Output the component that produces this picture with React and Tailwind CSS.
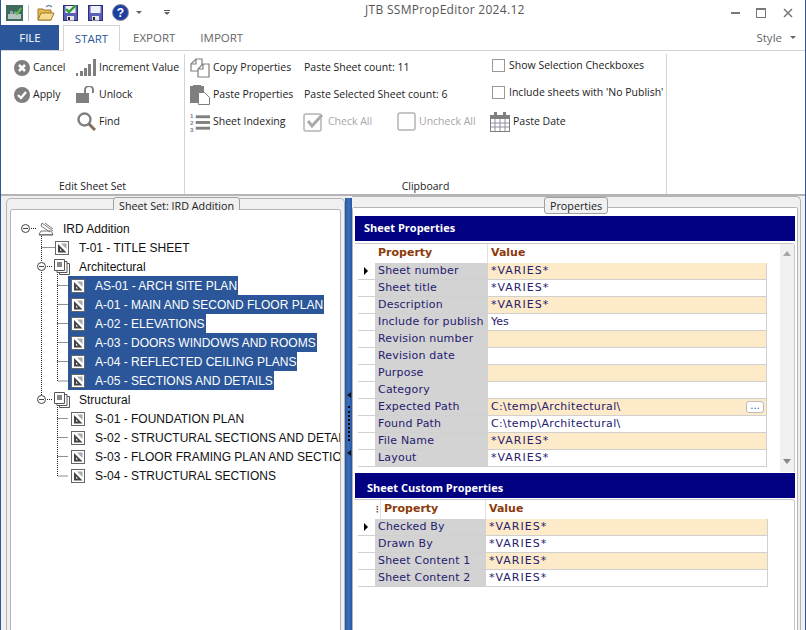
const ui = { fontFamily: '"Open Sans", "Liberation Sans", sans-serif' }

function AppIcon() {
  return (
    <svg width="17" height="16" viewBox="0 0 17 16">
      <rect width="17" height="16" fill="#3f6a5e" />
      <rect x="2" y="9" width="13" height="5" fill="#b7c4c4" />
      <path d="M4 9V6h3v3M8 9V7h3v2" fill="#8fa3a8" />
      <path d="M9 7l2 2 4-6" fill="none" stroke="#5fbf4f" strokeWidth="2" />
    </svg>
  )
}

function OpenIcon() {
  return (
    <svg width="18" height="18" viewBox="0 0 18 18">
      <path d="M9 3c2-2 4-2 6 0" fill="none" stroke="#6d8bb0" strokeWidth="1.2" />
      <path d="M1 5h5l1 1h7v10H1z" fill="#e8b94f" stroke="#9a7a2c" />
      <path d="M4 9h13l-3 7H1z" fill="#f6dc8e" stroke="#9a7a2c" />
    </svg>
  )
}

function SaveIcon({ check }) {
  return (
    <svg width="15" height="16" viewBox="0 0 15 16">
      <rect x="0.5" y="0.5" width="14" height="15" fill="#5a5fb8" stroke="#2d2f7a" />
      <rect x="2.5" y="1" width="10" height="7" fill="#eef0fa" />
      <rect x="4" y="11" width="7" height="4.5" fill="#e8e8e8" />
      <rect x="5" y="12" width="2" height="3" fill="#222" />
      {check && <path d="M3 4l3 3 7-7" fill="none" stroke="#2f9e2f" strokeWidth="2.4" />}
    </svg>
  )
}

function HelpIcon() {
  return (
    <svg width="17" height="17" viewBox="0 0 17 17">
      <circle cx="8.5" cy="8.5" r="8" fill="#1f3f9e" stroke="#8a8fa0" />
      <text x="8.5" y="13" textAnchor="middle" fontSize="12" fontWeight="700" fontFamily="Liberation Sans" fill="#fff">?</text>
    </svg>
  )
}

function Caret({ className = '' }) {
  return <span className={`inline-block w-0 h-0 border-x-[3px] border-x-transparent border-t-[3px] border-t-[#666] ${className}`}></span>
}

function CancelIcon() {
  return (
    <svg width="16" height="16" viewBox="0 0 16 16">
      <circle cx="8" cy="8" r="8" fill="#7f7f7f" />
      <path d="M5 5l6 6M11 5l-6 6" stroke="#fff" strokeWidth="2.6" />
    </svg>
  )
}

function ApplyIcon() {
  return (
    <svg width="16" height="16" viewBox="0 0 16 16">
      <circle cx="8" cy="8" r="8" fill="#7f7f7f" />
      <path d="M4 8l3 3 5-6" fill="none" stroke="#fff" strokeWidth="2.4" />
    </svg>
  )
}

function IncrementIcon() {
  return (
    <svg width="20" height="17" viewBox="0 0 20 17" fill="#7f7f7f">
      <rect x="0" y="14" width="2" height="3" />
      <rect x="4" y="12" width="3" height="5" />
      <rect x="8" y="9" width="3" height="8" />
      <rect x="12" y="5" width="3" height="12" />
      <rect x="17" y="0" width="3" height="17" />
    </svg>
  )
}

function LockIcon() {
  return (
    <svg width="20" height="17" viewBox="0 0 20 17">
      <rect x="0" y="7" width="13" height="10" fill="#7f7f7f" />
      <path d="M9 7V4a4 4 0 0 1 8 0v3" fill="none" stroke="#7f7f7f" strokeWidth="2" />
    </svg>
  )
}

function FindIcon() {
  return (
    <svg width="19" height="19" viewBox="0 0 19 19">
      <circle cx="7.5" cy="7.5" r="6" fill="none" stroke="#7f7f7f" strokeWidth="2.4" />
      <path d="M12 12l6 6" stroke="#7f6f5f" strokeWidth="3" />
    </svg>
  )
}

function CopyIcon() {
  return (
    <svg width="20" height="20" viewBox="0 0 20 20" fill="#fff" stroke="#7f7f7f" strokeWidth="1.2">
      <path d="M1 6l5-5h6v12H1z" />
      <path d="M8 11l5-5h6v13H8z" />
      <path d="M1 6h5V1M8 11h5V6" fill="none" />
    </svg>
  )
}

function PasteIcon() {
  return (
    <svg width="20" height="20" viewBox="0 0 20 20">
      <rect x="0" y="1" width="14" height="17" fill="#7f7f7f" />
      <rect x="3" y="0" width="8" height="3" fill="#7f7f7f" />
      <path d="M8.5 7.5h6l5 5v7h-11z" fill="#fff" stroke="#7f7f7f" />
    </svg>
  )
}

function IndexIcon() {
  return (
    <svg width="21" height="20" viewBox="0 0 21 20">
      <text x="0" y="6" fontSize="6.5" fontWeight="700" fontFamily="Liberation Sans" fill="#7f7f7f">1</text>
      <text x="0" y="13" fontSize="6.5" fontWeight="700" fontFamily="Liberation Sans" fill="#7f7f7f">2</text>
      <text x="0" y="20" fontSize="6.5" fontWeight="700" fontFamily="Liberation Sans" fill="#7f7f7f">3</text>
      <rect x="6" y="3" width="15" height="3" fill="#7f7f7f" />
      <rect x="6" y="9" width="15" height="3" fill="#7f7f7f" />
      <rect x="6" y="15" width="15" height="3" fill="#7f7f7f" />
    </svg>
  )
}

function CheckAllIcon() {
  return (
    <svg width="22" height="20" viewBox="0 0 22 20">
      <rect x="1" y="2" width="17" height="17" rx="2" fill="none" stroke="#b4b4b4" strokeWidth="1.5" />
      <path d="M5 9l4 5 10-11" fill="none" stroke="#ababab" strokeWidth="3" />
    </svg>
  )
}

function UncheckIcon() {
  return (
    <svg width="19" height="19" viewBox="0 0 19 19">
      <rect x="1" y="1" width="17" height="17" rx="2" fill="none" stroke="#b4b4b4" strokeWidth="1.5" />
    </svg>
  )
}

function CalendarIcon() {
  return (
    <svg width="20" height="20" viewBox="0 0 20 20">
      <rect x="0.5" y="3.5" width="19" height="16" fill="#fff" stroke="#7f7f7f" />
      <rect x="0" y="3" width="20" height="4" fill="#7f7f7f" />
      <rect x="4" y="0" width="3" height="5" fill="#7f7f7f" />
      <rect x="13" y="0" width="3" height="5" fill="#7f7f7f" />
      <path d="M5 7v12M10 7v12M15 7v12M1 11h18M1 15h18" stroke="#8f8f9f" />
    </svg>
  )
}

function SheetIcon() {
  return (
    <svg className="shrink-0" width="14" height="14" viewBox="0 0 14 14">
      <rect x="0.5" y="0.5" width="13" height="13" fill="#fff" stroke="#666" />
      <path d="M3 11.5V3l8.5 8.5z" fill="#444" />
      <path d="M5 9.5V7.5l2 2z" fill="#fff" />
      <path d="M6 2.5h5.5V8z" fill="#aaa" />
    </svg>
  )
}

function StackIcon() {
  return (
    <svg className="shrink-0" width="16" height="16" viewBox="0 0 16 16" fill="#fff" stroke="#555">
      <path d="M5.5 4.5h10v11h-10z" />
      <path d="M3 2.5h10v11H3z" />
      <path d="M0.5 0.5h10v11h-10z" />
      <rect x="3" y="3" width="5" height="5" fill="#888" stroke="none" />
    </svg>
  )
}

function SetIcon() {
  return (
    <svg className="shrink-0" width="16" height="14" viewBox="0 0 16 14" fill="none" stroke="#777">
      <path d="M1 12.5h14L13 9H3z" />
      <path d="M4 1l11 8M7 1l8 6M4 1l-1 3 9 6" />
      <path d="M1 13.5h14" stroke="#aaa" />
    </svg>
  )
}

function Expander() {
  return (
    <span className="shrink-0 w-[9px] h-[9px] rounded-full border border-[#444] bg-white flex items-center justify-center">
      <span className="w-[5px] h-px bg-[#444]"></span>
    </span>
  )
}

function RibbonBtn({ icon, children, disabled, iconBox = 'w-[20px]', className = '' }) {
  return (
    <div className={`flex items-center h-[27px] gap-[3px] whitespace-nowrap ${disabled ? 'text-[#a6a6a6]' : 'text-[#222]'} ${className}`}>
      <span className={`flex justify-center items-center shrink-0 ${iconBox}`}>{icon}</span>
      <span>{children}</span>
    </div>
  )
}

function CheckOption({ children }) {
  return (
    <div className="flex items-center h-[27px] pb-[4px] pl-[2px] gap-[4px] whitespace-nowrap text-[#222]">
      <span className="w-[13px] h-[13px] border border-[#999] bg-white shrink-0"></span>
      {children}
    </div>
  )
}

function Ribbon() {
  return (
    <div className="h-[144px] flex text-[10.5px] pt-[3px] border-t border-[#d4d4d4] shrink-0" style={ui}>
      <div className="w-[184px] flex flex-col border-r border-[#d4d4d4]">
        <div className="flex-1 flex pl-[12px]">
          <div className="w-[63px] shrink-0">
            <RibbonBtn icon={<CancelIcon />} iconBox="w-[17px]">Cancel</RibbonBtn>
            <RibbonBtn icon={<ApplyIcon />} iconBox="w-[17px]">Apply</RibbonBtn>
          </div>
          <div>
            <RibbonBtn icon={<IncrementIcon />}>Increment Value</RibbonBtn>
            <RibbonBtn icon={<LockIcon />}>Unlock</RibbonBtn>
            <RibbonBtn icon={<FindIcon />}>Find</RibbonBtn>
          </div>
        </div>
        <div className="h-[16px] text-center text-[#222] leading-[16px]">Edit Sheet Set</div>
      </div>
      <div className="w-[482px] flex flex-col border-r border-[#d4d4d4]">
        <div className="flex-1 grid grid-cols-[113px_94px_93px_1fr] auto-rows-[27px] pl-[5px]">
          <RibbonBtn icon={<CopyIcon />}>Copy Properties</RibbonBtn>
          <div className="col-span-2 pl-[1px] flex items-center text-[#222] whitespace-nowrap">Paste Sheet count: 11</div>
          <CheckOption>Show Selection Checkboxes</CheckOption>
          <RibbonBtn icon={<PasteIcon />}>Paste Properties</RibbonBtn>
          <div className="col-span-2 pl-[1px] flex items-center text-[#222] whitespace-nowrap">Paste Selected Sheet count: 6</div>
          <CheckOption>Include sheets with 'No Publish'</CheckOption>
          <RibbonBtn icon={<IndexIcon />}>Sheet Indexing</RibbonBtn>
          <RibbonBtn icon={<CheckAllIcon />} disabled iconBox="w-[22px]">Check All</RibbonBtn>
          <RibbonBtn icon={<UncheckIcon />} disabled iconBox="w-[19px]">Uncheck All</RibbonBtn>
          <RibbonBtn icon={<CalendarIcon />}>Paste Date</RibbonBtn>
        </div>
        <div className="h-[16px] text-center text-[#222] leading-[16px]">Clipboard</div>
      </div>
    </div>
  )
}

function TreeRow({ indent, icon, label, expander, selected, textGap = 'ml-[10px]' }) {
  return (
    <div className="h-[19px] flex items-center whitespace-nowrap" style={{ paddingLeft: indent }}>
      {expander && <span className="mr-[8px]"><Expander /></span>}
      {selected ? (
        <span className="flex items-center h-[19px] bg-[#2b579a] text-white pl-[3px] pr-[1px] -ml-[3px]">
          {icon}
          <span className={textGap}>{label}</span>
        </span>
      ) : (
        <>
          {icon}
          <span className={textGap}>{label}</span>
        </>
      )}
    </div>
  )
}

function Tree() {
  return (
    <div className="relative flex-1 bg-white overflow-hidden pt-[9px] text-[12px] text-[#111]" style={{ fontFamily: '"Liberation Sans", sans-serif' }}>
      {/* dotted tree connectors */}
      <svg className="absolute left-0 top-[-1px]" width="70" height="300" fill="none" stroke="#222" strokeDasharray="1 1">
        <path d="M30.5 25V186M46.5 63V172H57M46.5 196V267H57" />
        <path d="M30.5 38.5H44M46.5 76.5H57M46.5 95.5H57M46.5 114.5H57M46.5 133.5H57M46.5 152.5H57M46.5 209.5H57M46.5 228.5H57M46.5 247.5H57" />
        <path d="M20 19.5H26M36 57.5H42M36 190.5H42" />
      </svg>
      <div className="relative">
        <TreeRow indent={10} expander icon={<SetIcon />} label="IRD Addition" textGap="ml-[9px]" />
        <TreeRow indent={44} icon={<SheetIcon />} label="T-01 - TITLE SHEET" />
        <TreeRow indent={26} expander icon={<StackIcon />} label="Architectural" textGap="ml-[9px]" />
        {['AS-01 - ARCH SITE PLAN', 'A-01 - MAIN AND SECOND FLOOR PLAN', 'A-02 - ELEVATIONS', 'A-03 - DOORS WINDOWS AND ROOMS', 'A-04 - REFLECTED CEILING PLANS', 'A-05 - SECTIONS AND DETAILS'].map(s => (
          <TreeRow key={s} indent={60} selected icon={<SheetIcon />} label={s} />
        ))}
        <TreeRow indent={26} expander icon={<StackIcon />} label="Structural" textGap="ml-[9px]" />
        {['S-01 - FOUNDATION PLAN', 'S-02 - STRUCTURAL SECTIONS AND DETAILS', 'S-03 - FLOOR FRAMING PLAN AND SECTIONS', 'S-04 - STRUCTURAL SECTIONS'].map(s => (
          <TreeRow key={s} indent={60} icon={<SheetIcon />} label={s} />
        ))}
      </div>
    </div>
  )
}

function Legend({ children, className }) {
  return (
    <div className={`absolute top-0 h-[17px] px-[5px] bg-[#f0f0f0] border border-[#a0a0a0] rounded-[3px] text-[10.75px] leading-[16px] text-[#222] whitespace-nowrap ${className}`} style={ui}>
      {children}
    </div>
  )
}

function Splitter() {
  return (
    <div className="w-[7px] shrink-0 mt-[2px] bg-gradient-to-r from-[#2b579a] via-[#3b6fc4] to-[#2b579a] flex flex-col items-center pt-[194px]">
      <span className="w-0 h-0 border-y-[3px] border-y-transparent border-r-[4px] border-r-[#111]"></span>
      <span className="mt-[8px] h-[35px] w-[2px] border-l-2 border-dotted border-black"></span>
      <span className="mt-[9px] w-0 h-0 border-y-[3px] border-y-transparent border-r-[4px] border-r-[#111]"></span>
    </div>
  )
}

const sheetProps = [
  ['Sheet number', '*VARIES*'],
  ['Sheet title', '*VARIES*'],
  ['Description', '*VARIES*'],
  ['Include for publish', 'Yes'],
  ['Revision number', ''],
  ['Revision date', ''],
  ['Purpose', ''],
  ['Category', ''],
  ['Expected Path', 'C:\\temp\\Architectural\\'],
  ['Found Path', 'C:\\temp\\Architectural\\'],
  ['File Name', '*VARIES*'],
  ['Layout', '*VARIES*'],
]

const customProps = [
  ['Checked By', '*VARIES*'],
  ['Drawn By', '*VARIES*'],
  ['Sheet Content 1', '*VARIES*'],
  ['Sheet Content 2', '*VARIES*'],
]

function valueSpacing(value) {
  if (value.startsWith('*')) return 'tracking-[1px]'
  if (value.startsWith('C:')) return 'tracking-[0.35px]'
  return ''
}

function PropRow({ name, value, index, propW, current, browse }) {
  return (
    <div className="flex h-[17px] leading-[16px] border-b border-[#d0d0d0]">
      <div className="w-[17px] shrink-0 bg-white flex items-center pl-[6px]">
        {current && <span className="w-0 h-0 border-y-[4px] border-y-transparent border-l-[4px] border-l-black"></span>}
      </div>
      <div className="shrink-0 bg-[#d3d3d3] pl-[3px] text-[#25206e] tracking-[0.2px] whitespace-nowrap" style={{ width: propW }}>{name}</div>
      <div className={`flex-1 flex justify-between pl-[3px] border-r border-[#d0d0d0] text-[#25206e] ${index % 2 === 0 ? 'bg-[#fdeac8]' : 'bg-white'}`}>
        <span className={valueSpacing(value)}>{value}</span>
        {browse && (
          <span className="w-[18px] h-[12px] mt-[2px] mr-[2px] rounded-[3px] border border-[#bbb] bg-white text-[#2266bb] text-[10px] leading-[7px] text-center">...</span>
        )}
      </div>
    </div>
  )
}

function GridHeader({ propW, dots }) {
  return (
    <div className="flex h-[19px] leading-[18px] font-bold text-[#8b3a0a]">
      <div className="w-[17px] shrink-0"></div>
      {dots ? (
        <div className="shrink-0 flex border-r border-[#e0e0e0]" style={{ width: propW }}>
          <span className="w-[6px] flex items-center justify-center border-r border-[#e0e0e0] text-[8px] text-[#8b3a0a]">⋮</span>
          <span className="pl-[3px]">Property</span>
        </div>
      ) : (
        <div className="shrink-0 pl-[3px] border-r border-[#e0e0e0]" style={{ width: propW }}>Property</div>
      )}
      <div className="pl-[3px]">Value</div>
    </div>
  )
}

function SectionBar({ children, className = '' }) {
  return (
    <div className={`h-[25px] shrink-0 bg-[#000080] text-white font-bold text-[11px] flex items-center ${className}`} style={ui}>
      {children}
    </div>
  )
}

function Properties() {
  return (
    <div className="flex-1 flex flex-col bg-white text-[11px] pt-[8px] pl-[2px] pr-[2px]" style={{ fontFamily: '"DejaVu Sans", sans-serif' }}>
      <SectionBar className="pl-[9px]">Sheet Properties</SectionBar>
      <div className="mt-[2px] h-[229px] mb-[1px] shrink-0 flex rounded-tr-[3px] border-t border-[#c8c8c8] border-r">
        <div className="w-[412px] pl-[3px]">
          <GridHeader propW={113} />
          {sheetProps.map(([n, v], i) => (
            <PropRow key={n} name={n} value={v} index={i} propW={113} current={i === 0} browse={n === 'Expected Path'} />
          ))}
        </div>
        <div className="flex-1"></div>
        <div className="w-[14px] bg-[#f0f0f0] flex flex-col items-center justify-between pt-[7px] pb-[8px]">
          <span className="w-0 h-0 border-x-[4px] border-x-transparent border-b-[5px] border-b-[#a6a6a6]"></span>
          <span className="w-0 h-0 border-x-[4px] border-x-transparent border-t-[5px] border-t-[#888]"></span>
        </div>
      </div>
      <SectionBar className="pl-[12px] pt-[5px]">Sheet Custom Properties</SectionBar>
      <div className="mt-[1px] flex-1 flex border-t border-r border-[#c8c8c8] rounded-tr-[3px]">
        <div className="w-[413px] pl-[3px]">
          <GridHeader propW={111} dots />
          {customProps.map(([n, v], i) => (
            <PropRow key={n} name={n} value={v} index={i} propW={111} current={i === 0} />
          ))}
        </div>
      </div>
    </div>
  )
}

export default function App() {
  return (
    <div className="w-[806px] h-[630px] overflow-hidden flex flex-col bg-white border-x border-[#2b579a]" style={ui}>
      <div className="h-[25px] shrink-0 flex items-center relative">
        <div className="flex items-center pl-[5px]">
          <AppIcon />
          <span className="ml-[5px] w-px h-[16px] bg-[#c0c0c0]"></span>
          <span className="ml-[8px]"><OpenIcon /></span>
          <span className="ml-[8px]"><SaveIcon check /></span>
          <span className="ml-[10px]"><SaveIcon /></span>
          <span className="ml-[9px]"><HelpIcon /></span>
          <Caret className="ml-[7px]" />
          <span className="ml-[22px] flex flex-col items-center gap-[1px]">
            <span className="w-[6px] h-px bg-[#555]"></span>
            <Caret />
          </span>
        </div>
        <div className="absolute left-[364px] top-[2px] text-[12px] leading-[16px] text-[#555] tracking-[0.3px]">JTB SSMPropEditor 2024.12</div>
        <div className="ml-auto flex items-center pr-[12px]">
          <span className="w-[9px] h-[2px] bg-[#777]"></span>
          <span className="ml-[16px] w-[10px] h-[10px] border border-[#777] border-t-2"></span>
          <svg className="ml-[17px]" width="10" height="10" viewBox="0 0 10 10"><path d="M1 1l8 8M9 1l-8 8" stroke="#777" strokeWidth="1.5" /></svg>
        </div>
      </div>

      <div className="h-[25px] shrink-0 flex items-stretch text-[11.5px]">
        <div className="w-[58px] bg-[#2b579a] text-white flex items-center justify-center">FILE</div>
        <div className="ml-[4px] w-[57px] bg-white border border-b-0 border-[#d4d4d4] relative z-10 -mb-[1px] text-[#2b579a] flex items-center justify-center">START</div>
        <div className="ml-[13px] text-[#666] flex items-center">EXPORT</div>
        <div className="ml-[25px] text-[#666] flex items-center">IMPORT</div>
        <div className="ml-auto pr-[9px] flex items-center text-[#666] gap-[8px]">
          Style
          <Caret />
        </div>
      </div>

      <Ribbon />

      <div className="flex-1 min-h-0 flex bg-[#f0f0f0] border-t-2 border-[#b4b4b4] pl-[5px] pr-[4px]">
        <div className="relative w-[339px] shrink-0 pt-[2px]">
          <Legend className="left-[107px] top-[1px]">Sheet Set: IRD Addition</Legend>
          <div className="h-full border border-b-0 border-[#b4b4b4] rounded-t-[5px] pt-[10px] px-[3px] flex">
            <div className="flex-1 border border-b-0 border-[#b4b4b4] rounded-t-[3px] flex overflow-hidden">
              <Tree />
            </div>
          </div>
        </div>
        <Splitter />
        <div className="relative flex-1 min-w-0">
          <Legend className="left-[192px] top-[1px]">Properties</Legend>
          <div className="h-full border border-b-0 border-l-0 border-[#b4b4b4] rounded-tr-[5px] pt-[10px] pr-[2px] flex">
            <div className="flex-1 min-w-0 border border-b-0 border-[#b4b4b4] rounded-t-[3px] flex">
              <Properties />
            </div>
          </div>
        </div>
      </div>
    </div>
  )
}
